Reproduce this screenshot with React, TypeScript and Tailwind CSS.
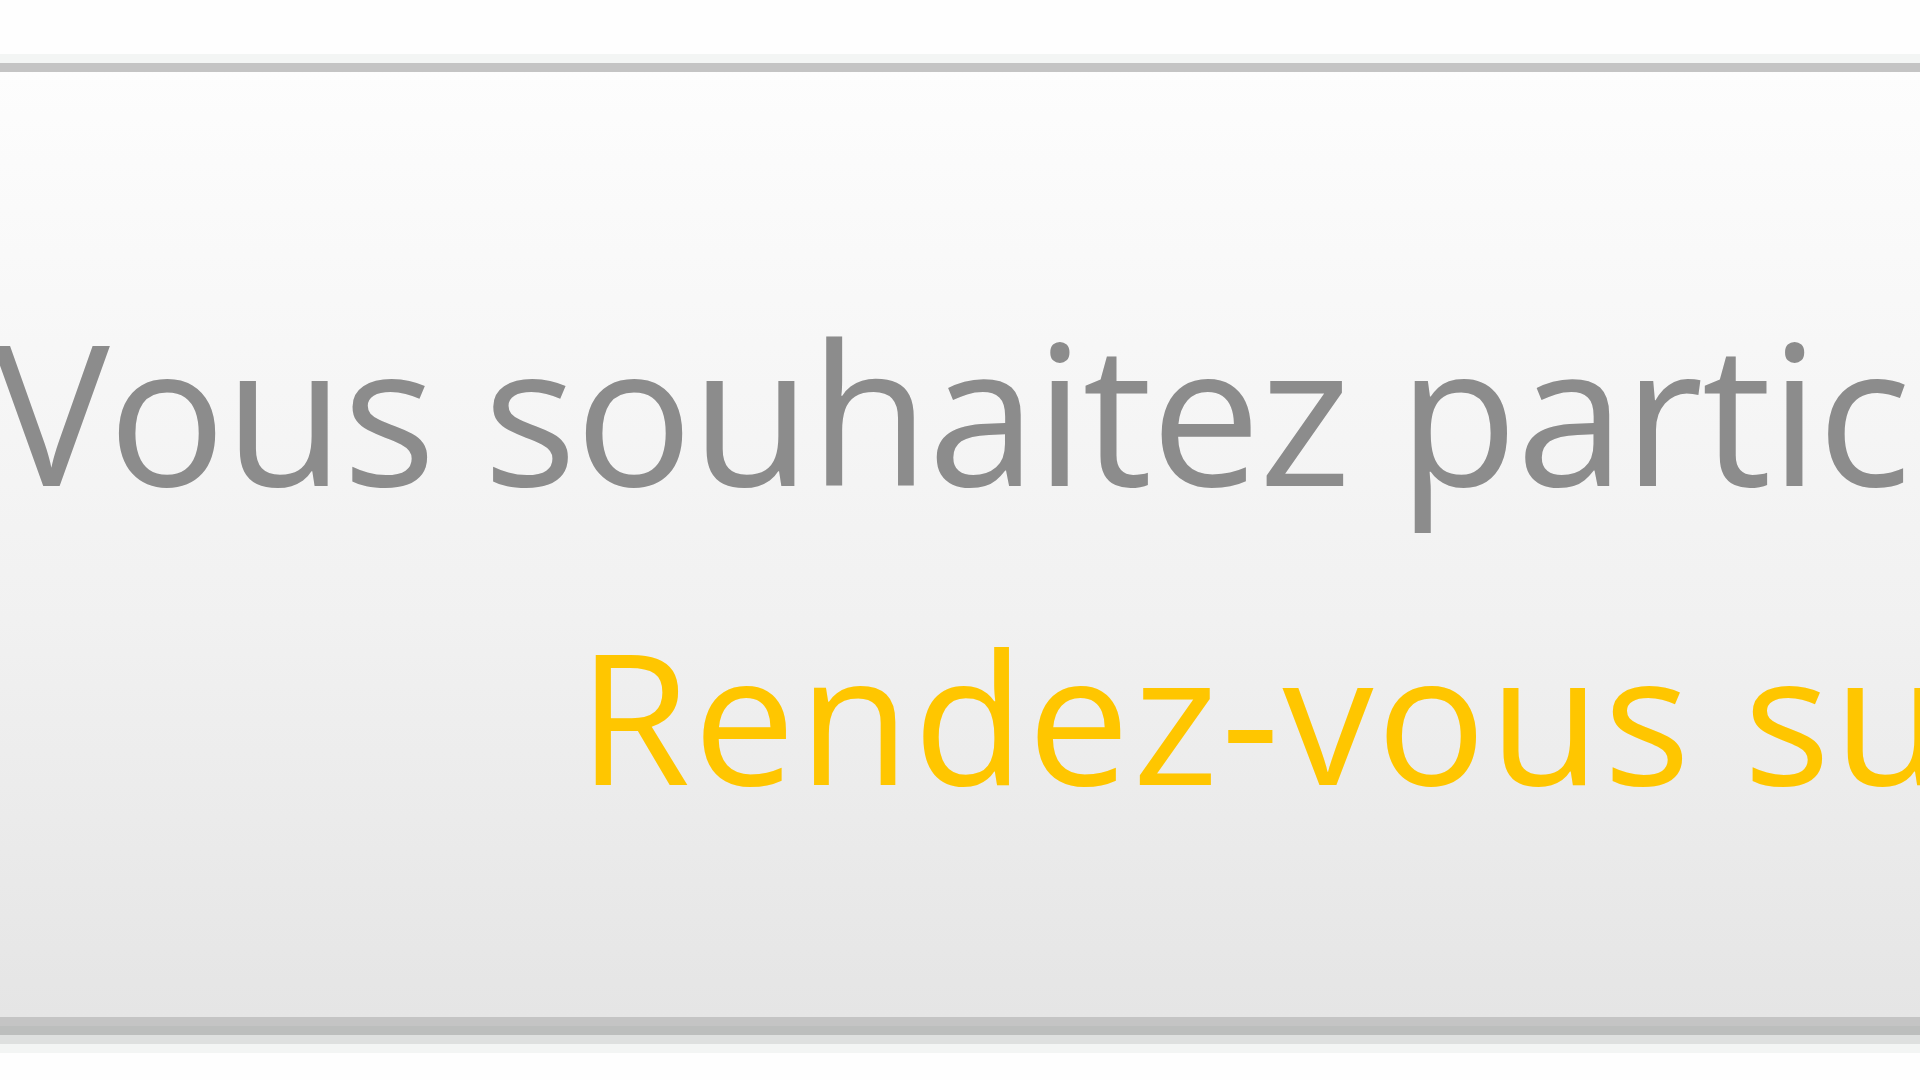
export default function App() {
  return (
    <div className="w-full h-screen overflow-hidden bg-[#fefefe] flex flex-col" style={{ fontFamily: "'Open Sans', 'Liberation Sans', sans-serif" }}>
      <div className="h-[54px] shrink-0" />
      <div className="h-[9px] shrink-0 bg-[#f3f5f4]" />
      <div className="h-[9px] shrink-0 bg-[#c4c4c4]" />

      {/* banner */}
      <div className="h-[945px] shrink-0 overflow-hidden bg-gradient-to-b from-[#fdfdfd] via-[#f1f1f1] via-58% to-[#e5e5e5] pt-[240px] whitespace-nowrap">
        <div className="-ml-[7px] text-[196px] leading-none tracking-[-1.8px] text-[#8c8c8c]">Vous souhaitez participer à cet événement ?</div>
        <div className="mt-[115px] pl-[578px] text-[182px] leading-none tracking-[3px] text-[#ffc600]">Rendez-vous sur notre site</div>
      </div>

      <div className="h-[9px] shrink-0 bg-[#c4c4c4]" />
      <div className="h-[9px] shrink-0 bg-[#bcbebd]" />
      <div className="h-[9px] shrink-0 bg-[#dee0df]" />
      <div className="h-[9px] shrink-0 bg-[#f3f5f4]" />
    </div>
  );
}
